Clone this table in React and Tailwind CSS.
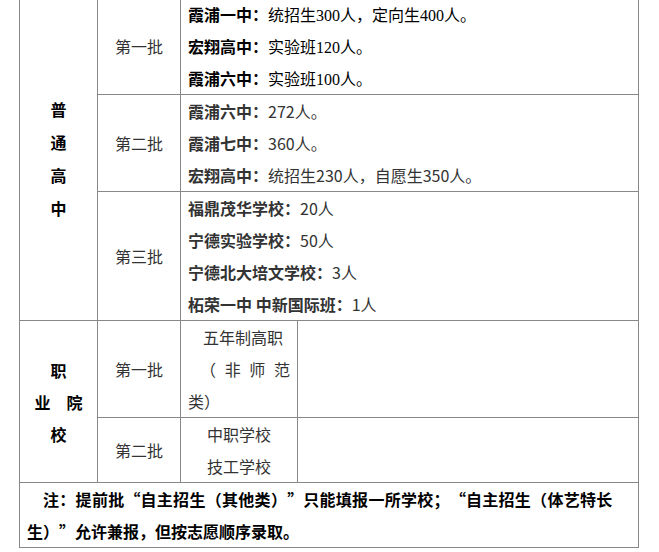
const cjk = { fontFamily: '"Noto Sans CJK SC", sans-serif' };
const serifCjk = { fontFamily: '"Liberation Serif", "Noto Sans CJK SC", serif' };

const cell = 'border border-[#888] align-middle p-0';

function Line({ name, rest, serif }) {
  return (
    <div className="h-[32px] whitespace-nowrap">
      <span className="font-bold">{name}</span>
      <span className="leading-none" style={serif ? serifCjk : cjk}>{rest}</span>
    </div>
  );
}

// full-width quote marks, as the Song face sets them
const Lq = () => <span className="inline-block w-[16px] text-right">“</span>;
const Rq = () => <span className="inline-block w-[16px] text-left">”</span>;

export default function App() {
  return (
    <div className="bg-white w-[659px] h-[552px] overflow-hidden" style={cjk}>
      <table className="table-fixed border-collapse w-[619px] ml-[19px] -mt-[3px] text-[16px] leading-[32px]">
        <colgroup>
          <col className="w-[78px]" />
          <col className="w-[83px]" />
          <col className="w-[117px]" />
          <col className="w-[341px]" />
        </colgroup>
        <tbody>
          <tr className="h-[97px]">
            <td rowSpan={3} className={`${cell} text-center font-bold text-black leading-[33px]`}>
              <div>普</div>
              <div>通</div>
              <div>高</div>
              <div>中</div>
            </td>
            <td className={`${cell} text-center text-[#333]`}>第一批</td>
            <td colSpan={2} className={`${cell} px-[7px] text-black`}>
              <Line serif name="霞浦一中：" rest="统招生300人，定向生400人。" />
              <Line serif name="宏翔高中：" rest="实验班120人。" />
              <Line serif name="霞浦六中：" rest="实验班100人。" />
            </td>
          </tr>
          <tr className="h-[97px]">
            <td className={`${cell} text-center text-[#333]`}>第二批</td>
            <td colSpan={2} className={`${cell} px-[7px] text-[#333]`}>
              <Line name="霞浦六中：" rest="272人。" />
              <Line name="霞浦七中：" rest="360人。" />
              <Line name="宏翔高中：" rest="统招生230人，自愿生350人。" />
            </td>
          </tr>
          <tr className="h-[129px]">
            <td className={`${cell} text-center text-[#333]`}>第三批</td>
            <td colSpan={2} className={`${cell} px-[7px] text-[#333]`}>
              <Line name="福鼎茂华学校：" rest="20人" />
              <Line name="宁德实验学校：" rest="50人" />
              <Line name="宁德北大培文学校：" rest="3人" />
              <Line name="柘荣一中 中新国际班：" rest="1人" />
            </td>
          </tr>
          <tr className="h-[97px]">
            <td rowSpan={2} className={`${cell} text-center font-bold text-black`}>
              <div>职</div>
              <div className="flex justify-between w-[48px] mx-auto">
                <span>业</span>
                <span>院</span>
              </div>
              <div>校</div>
            </td>
            <td className={`${cell} text-center text-[#333]`}>第一批</td>
            <td className={`${cell} px-[7px] text-[#333]`}>
              <div className="pl-[15px] whitespace-nowrap">五年制高职</div>
              <div className="flex justify-between pl-[12px]">
                <span>（</span>
                <span>非</span>
                <span>师</span>
                <span>范</span>
              </div>
              <div className="whitespace-nowrap">类）</div>
            </td>
            <td className={cell}></td>
          </tr>
          <tr className="h-[65px]">
            <td className={`${cell} text-center text-[#333]`}>第二批</td>
            <td className={`${cell} text-center text-[#333]`}>
              <div>中职学校</div>
              <div>技工学校</div>
            </td>
            <td className={cell}></td>
          </tr>
          <tr className="h-[65px]">
            <td colSpan={4} className={`${cell} px-[7px] font-bold text-black`}>
              <div className="whitespace-nowrap pl-[16px] tracking-[0.3px]">
                注：提前批<Lq />自主招生（其他类）<Rq />只能填报一所学校；<Lq />自主招生（体艺特长
              </div>
              <div className="whitespace-nowrap">
                生）<Rq />允许兼报，但按志愿顺序录取。
              </div>
            </td>
          </tr>
        </tbody>
      </table>
    </div>
  );
}
